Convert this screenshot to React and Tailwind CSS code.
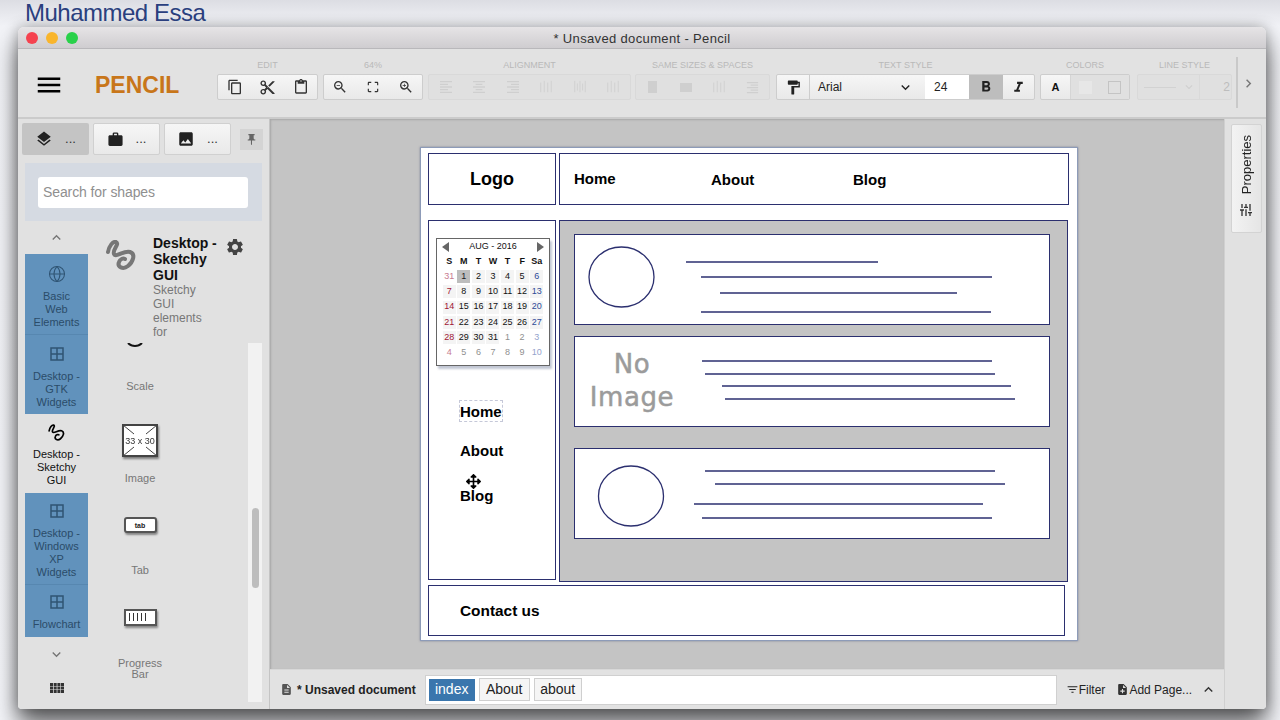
import React from "react";
import {
  MdContentCopy, MdContentCut, MdContentPaste, MdZoomIn, MdZoomOut, MdCropFree, MdFormatAlignLeft, MdFormatAlignCenter,
  MdFormatAlignRight, MdFormatPaint, MdFormatItalic, MdFormatBold, MdLayers, MdWork, MdPhoto, MdPushPin, MdSettings,
  MdBorderAll, MdExpandLess, MdExpandMore, MdTune, MdFilterList, MdNoteAdd, MdDescription, MdMenu, MdChevronRight,
} from "react-icons/md";
import { FaArrowsAlt } from "react-icons/fa";
import { Globe } from "lucide-react";

function Squiggle({ className, thin }) {
  return (
    <svg viewBox="0 0 30 30" className={className} fill="none" stroke="currentColor" strokeWidth={thin ? 3 : 4} strokeLinecap="round" strokeLinejoin="round">
      <path d="M2 12C3 6 7 1 10 2C14 4 6 10 8 14C10 18 18 10 24 12C30 14 27 22 22 26C17 30 11 27 13 22C14 19 17 18 19 19" />
    </svg>
  );
}

function VBars({ three }) {
  return (
    <svg viewBox="0 0 16 16" className="h-[14px] w-[14px]" stroke="currentColor" fill="none">
      <path d={three ? "M2 3V14M6 1V14M10 3V14M14 1V14" : "M2 1V14M5 4V12M8 1V14M11 4V12M14 1V14"} />
    </svg>
  );
}

function Group({ label, className, children, off }) {
  return (
    <div className={`flex shrink-0 flex-col ${className}`}>
      <div className="flex h-[12px] items-center justify-center text-[9px] text-[#b9b9b9]">{label}</div>
      <div className={`mt-[2px] flex h-[26px] items-center rounded-[2px] border ${off ? "border-[#d9d9d9] bg-[#e0e0e0] text-[#cfcfcf]" : "border-[#cdcdcd] bg-gradient-to-b from-[#f6f6f6] to-[#e9e9e9] text-[#333]"}`}>
        {children}
      </div>
    </div>
  );
}

function TB({ children, className = "" }) {
  return <div className={`flex h-full flex-1 items-center justify-center ${className}`}>{children}</div>;
}

function Toolbar() {
  return (
    <div className="flex h-[70px] shrink-0 border-b-2 border-[#cbcbcb] bg-[#e2e2e2] pt-[11px]">
      <div className="mt-[6px] flex h-[38px] w-[199px] shrink-0 items-center">
        <MdMenu className="ml-[16px] h-[30px] w-[30px] text-black" />
        <span className="ml-[31px] text-[23px] font-bold text-[#c8761a]">PENCIL</span>
      </div>
      <Group label="EDIT" className="w-[101px]">
        <TB><MdContentCopy className="text-[16px]" /></TB>
        <TB><MdContentCut className="text-[17px]" /></TB>
        <TB><MdContentPaste className="text-[16px]" /></TB>
      </Group>
      <Group label="64%" className="ml-[5px] w-[100px]">
        <TB><MdZoomOut className="text-[16px]" /></TB>
        <TB><MdCropFree className="text-[14px]" /></TB>
        <TB><MdZoomIn className="text-[16px]" /></TB>
      </Group>
      <Group label="ALIGNMENT" className="ml-[5px] w-[203px]" off>
        <TB><MdFormatAlignLeft className="text-[16px]" /></TB>
        <TB><MdFormatAlignCenter className="text-[16px]" /></TB>
        <TB><MdFormatAlignRight className="text-[16px]" /></TB>
        <TB><VBars three /></TB>
        <TB><VBars /></TB>
        <TB><VBars three /></TB>
      </Group>
      <Group label="SAME SIZES & SPACES" className="ml-[4px] w-[135px]" off>
        <TB><div className="h-[12px] w-[9px] bg-[#cfcfcf]" /></TB>
        <TB><div className="h-[9px] w-[12px] bg-[#cfcfcf]" /></TB>
        <TB><VBars three /></TB>
        <TB><MdFormatAlignRight className="text-[15px]" /></TB>
      </Group>
      <Group label="TEXT STYLE" className="ml-[6px] w-[259px]">
        <div className="flex h-full w-[33px] items-center justify-center border-r border-[#cdcdcd]"><MdFormatPaint className="text-[17px] text-[#222]" /></div>
        <div className="flex h-full w-[115px] items-center justify-between pl-[8px] pr-[11px] text-[12px] text-[#222]">
          <span>Arial</span>
          <MdExpandMore className="text-[17px]" />
        </div>
        <div className="flex h-full w-[44px] items-center bg-white pl-[9px] text-[12px] text-[#222]">24</div>
        <div className="flex h-full w-[34px] items-center justify-center bg-[#bdbdbd]"><MdFormatBold className="text-[18px] text-[#222]" /></div>
        <div className="flex h-full flex-1 items-center justify-center"><MdFormatItalic className="text-[17px] text-[#222]" /></div>
      </Group>
      <Group label="COLORS" className="ml-[5px] w-[90px]">
        <div className="flex h-full w-[30px] items-center justify-center border-r border-[#d5d5d5] text-[11px] font-bold text-[#111]">A</div>
        <div className="flex h-full flex-1 items-center justify-center bg-[#e0e0e0]"><div className="h-[13px] w-[13px] bg-[#e7e7e7]" /></div>
        <div className="flex h-full flex-1 items-center justify-center bg-[#e0e0e0]"><div className="h-[13px] w-[13px] border border-[#c4c4c4]" /></div>
      </Group>
      <Group label="LINE STYLE" className="ml-[7px] w-[95px]" off>
        <div className="flex h-full w-[62px] items-center justify-between border-r border-[#d9d9d9] pl-[6px] pr-[3px]">
          <div className="h-px w-[32px] bg-[#d2d2d2]" />
          <MdExpandMore className="text-[14px]" />
        </div>
        <div className="flex-1 pr-[1px] text-right text-[12px] text-[#bdbdbd]">2</div>
      </Group>
      <div className="ml-[4px] mt-[-3px] h-[51px] w-[2px] bg-[#c9c9c9]" />
      <MdChevronRight className="ml-[2px] mt-[15px] text-[17px] text-[#777]" />
    </div>
  );
}

function Category({ label, icon, className, selected }) {
  return (
    <div className={`flex flex-col items-center text-center text-[11px] leading-[13px] ${selected ? "text-[#111]" : "bg-[#6192bc] text-[#2b4c69]"} ${className}`}>
      {icon}
      <div className="mt-[7px]">{label}</div>
    </div>
  );
}

const catIcon = "h-[18px] w-[18px] text-[#2f5473]";

function Shape({ label, children, shift, twoLine }) {
  return (
    <div className="flex h-[92px] w-[104px] shrink-0 flex-col items-center">
      <div className={`flex h-[56px] items-center justify-center ${shift ? "-translate-y-[7px]" : ""}`}>{children}</div>
      <div className={`text-center text-[11px] text-[#777] ${twoLine ? "mt-[6px] leading-[11px]" : "mt-[3px] leading-[14px]"}`}>{label}</div>
    </div>
  );
}

function PanelTab({ icon, className }) {
  return (
    <div className={`flex w-[67px] items-center justify-center gap-[12px] rounded-[2px] ${className}`}>
      {icon}
      <span className="text-[13px] text-[#333]">...</span>
    </div>
  );
}

function LeftPanel() {
  const plain = "ml-[4px] border border-[#d0d0d0] bg-gradient-to-b from-[#f6f6f6] to-[#e9e9e9]";
  return (
    <div className="flex w-[252px] shrink-0 flex-col overflow-hidden rounded-bl-[4px] border-r border-[#c4c4c4] bg-[#e1e1e1]">
      <div className="mt-[4px] flex h-[32px] shrink-0 pl-[4px]">
        <PanelTab className="bg-[#c4c4c4]" icon={<MdLayers className="text-[18px] text-[#222]" />} />
        <PanelTab className={plain} icon={<MdWork className="text-[17px] text-[#222]" />} />
        <PanelTab className={plain} icon={<MdPhoto className="text-[18px] text-[#222]" />} />
        <div className="ml-[9px] mt-[6px] flex h-[21px] w-[23px] items-center justify-center bg-[#d4d4d4]"><MdPushPin className="text-[13px] text-[#666]" /></div>
      </div>
      <div className="ml-[7px] mt-[8px] flex h-[58px] w-[237px] shrink-0 items-center bg-[#d5dae2] pl-[13px]">
        <div className="flex h-[31px] w-[210px] items-center rounded-[3px] bg-white pl-[5px] pt-[1px] text-[14px] tracking-[-0.1px] text-[#8f8f8f]">Search for shapes</div>
      </div>
      <div className="flex min-h-0 flex-1">
        <div className="ml-[7px] flex w-[63px] shrink-0 flex-col">
          <div className="flex h-[33px] items-center justify-center"><MdExpandLess className="text-[17px] text-[#777]" /></div>
          <Category label={<>Basic<br />Web<br />Elements</>} icon={<Globe className={catIcon} strokeWidth={1.4} />} className="h-[81px] border-b border-[#5787b0] pt-[11px]" />
          <Category label={<>Desktop -<br />GTK<br />Widgets</>} icon={<MdBorderAll className={catIcon} />} className="h-[79px] pt-[10px]" />
          <Category label={<>Desktop -<br />Sketchy<br />GUI</>} selected icon={<Squiggle thin className="h-[17px] w-[17px] text-black" />} className="h-[79px] pt-[10px]" />
          <Category label={<>Desktop -<br />Windows<br />XP<br />Widgets</>} icon={<MdBorderAll className={catIcon} />} className="h-[92px] border-b border-[#5787b0] pt-[9px]" />
          <Category label="Flowchart" icon={<MdBorderAll className={catIcon} />} className="h-[52px] pt-[8px]" />
          <div className="flex h-[34px] items-center justify-center"><MdExpandMore className="text-[17px] text-[#777]" /></div>
          <div className="flex h-[34px] items-center justify-center">
            <svg viewBox="0 0 14 10" className="h-[10px] w-[14px]" fill="#333">
              <path d="M0 0h3v3H0zM3.7 0h3v3h-3zM7.4 0h3v3h-3zM11 0h3v3h-3zM0 3.6h3v3H0zM3.7 3.6h3v3h-3zM7.4 3.6h3v3h-3zM11 3.6h3v3h-3zM0 7h3v3H0zM3.7 7h3v3h-3zM7.4 7h3v3h-3zM11 7h3v3h-3z" />
            </svg>
          </div>
        </div>
        <div className="flex w-[174px] shrink-0 flex-col">
          <div className="h-[122px] shrink-0 pl-[18px] pt-[19px]">
            <div className="flex">
              <Squiggle className="h-[30px] w-[30px] shrink-0 text-[#777]" />
              <div className="ml-[17px] mt-[-5px] w-[68px]">
                <div className="text-[14px] font-bold leading-[16px] text-[#111]">Desktop - Sketchy GUI</div>
                <div className="w-[52px] text-[12px] leading-[14px] text-[#777]">Sketchy GUI elements for</div>
              </div>
              <MdSettings className="ml-[4px] mt-[-3px] shrink-0 text-[20px] text-[#444]" />
            </div>
          </div>
          <div className="flex h-[359px] shrink-0">
            <div className="w-[160px] overflow-hidden">
              <div className="-mt-[23px] flex flex-col">
                <Shape label="Scale">
                  <svg viewBox="0 0 16 8" className="-ml-[10px] -mt-[6px] h-[8px] w-[16px]" fill="none" stroke="#111" strokeWidth="2"><path d="M1 2C5 6 11 6 15 2" /></svg>
                </Shape>
                <Shape label="Image">
                  <svg viewBox="0 0 36 33" className="h-[33px] w-[36px] drop-shadow-[1px_2px_1px_rgba(0,0,0,0.45)]">
                    <rect x="1" y="1" width="34" height="31" fill="#fff" stroke="#444" strokeWidth="2" />
                    <path d="M1 1L12 10M35 1L24 10M1 32L12 23M35 32L24 23" stroke="#444" />
                    <text x="18" y="20" textAnchor="middle" fontSize="9" fontFamily="Liberation Sans" fill="#333">33 x 30</text>
                  </svg>
                </Shape>
                <Shape label="Tab" shift>
                  <div className="flex h-[16px] w-[33px] items-center justify-center rounded-[3px] border-2 border-[#555] bg-white text-[7px] font-bold leading-none text-[#222] shadow-[1px_2px_2px_rgba(0,0,0,0.4)]">tab</div>
                </Shape>
                <Shape label={<>Progress<br />Bar</>} shift twoLine>
                  <div className="flex h-[17px] w-[33px] items-center gap-[3px] border-2 border-[#555] bg-white pl-[3px] shadow-[1px_2px_2px_rgba(0,0,0,0.4)]">
                    <div className="h-[8px] w-px bg-[#333]" /><div className="h-[8px] w-px bg-[#333]" /><div className="h-[8px] w-px bg-[#333]" /><div className="h-[8px] w-px bg-[#333]" /><div className="h-[8px] w-px bg-[#333]" />
                  </div>
                </Shape>
              </div>
            </div>
            <div className="flex h-full w-[14px] shrink-0 flex-col items-center bg-[#f2f2f2] pt-[165px]">
              <div className="h-[80px] w-[7px] rounded-full bg-[#bdbdbd]" />
            </div>
          </div>
        </div>
      </div>
    </div>
  );
}

const calDays = [
  ["31", "o"], ["1", "s"], ["2", "c"], ["3", "c"], ["4", "c"], ["5", "c"], ["6", "c"],
  ["7", "c"], ["8", "c"], ["9", "c"], ["10", "c"], ["11", "c"], ["12", "c"], ["13", "c"],
  ["14", "c"], ["15", "c"], ["16", "c"], ["17", "c"], ["18", "c"], ["19", "c"], ["20", "c"],
  ["21", "c"], ["22", "c"], ["23", "c"], ["24", "c"], ["25", "c"], ["26", "c"], ["27", "c"],
  ["28", "c"], ["29", "c"], ["30", "c"], ["31", "c"], ["1", "o"], ["2", "o"], ["3", "o"],
  ["4", "o"], ["5", "o"], ["6", "o"], ["7", "o"], ["8", "o"], ["9", "o"], ["10", "o"],
];

function dayClass(kind, i) {
  const col = i % 7;
  if (kind === "s") return "bg-[#bdbdbd] text-[#222]";
  if (kind === "o") {
    if (col === 0) return "text-[#c77b90]";
    if (col === 6) return "text-[#95a3cc]";
    return "text-[#8f8f8f]";
  }
  if (col === 0) return "bg-[#f4f4f4] text-[#a01535]";
  if (col === 6) return "bg-[#f4f4f4] text-[#2f4b98]";
  return "bg-[#f4f4f4] text-[#111]";
}

function Calendar() {
  return (
    <div className="absolute left-[15px] top-[90px] h-[128px] w-[114px] border border-[#666] bg-white pl-[5px] font-normal shadow-[2px_3px_2px_rgba(120,130,160,0.45)]">
      <div className="flex h-[14px] w-[102px] items-center justify-between pt-[1px] text-[9px] text-[#111]">
        <div className="h-0 w-0 border-y-[5px] border-r-[7px] border-y-transparent border-r-[#666]" />
        <span>AUG - 2016</span>
        <div className="h-0 w-0 border-y-[5px] border-l-[7px] border-y-transparent border-l-[#666]" />
      </div>
      <div className="mt-[1px] grid w-[102px] grid-cols-7 auto-rows-[15.2px] text-center text-[9px]">
        {["S", "M", "T", "W", "T", "F", "Sa"].map((d, i) => (
          <div key={i} className="flex items-center justify-center font-bold text-[#111]">{d}</div>
        ))}
        {calDays.map(([d, k], i) => (
          <div key={i} className="flex items-center justify-center">
            <div className={`flex h-[13px] w-[13px] items-center justify-center ${dayClass(k, i)}`}>{d}</div>
          </div>
        ))}
      </div>
    </div>
  );
}

function Page() {
  const bx = "absolute border-[1.5px] border-[#2b2f6f]";
  const lines = [
    [686, 878, 262], [701, 992, 277], [720, 957, 293], [701, 991, 312],
    [702, 992, 361], [705, 995, 374], [722, 1011, 386], [725, 1015, 399],
    [705, 995, 471], [715, 1005, 484], [694, 983, 504], [702, 992, 518],
  ];
  return (
    <div className="absolute left-[150px] top-[28px] h-[494px] w-[658px] border border-[#8d9bb8] bg-white text-[15px] font-bold text-black shadow-[0_0_2px_rgba(60,70,110,0.5)]">
      <div className={`${bx} left-[7px] top-[5px] flex h-[52px] w-[128px] items-center justify-center text-[18px]`}>Logo</div>
      <div className={`${bx} left-[138px] top-[5px] h-[52px] w-[510px]`} />
      <span className="absolute left-[153px] top-[20px]">Home</span>
      <span className="absolute left-[290px] top-[21px]">About</span>
      <span className="absolute left-[432px] top-[21px]">Blog</span>

      <div className={`${bx} left-[7px] top-[72px] h-[360px] w-[128px]`} />
      <Calendar />
      <div className="absolute left-[38px] top-[252px] h-[22px] w-[44px] border border-dashed border-[#c5c8d8]" />
      <span className="absolute left-[39px] top-[253px]">Home</span>
      <span className="absolute left-[39px] top-[292px]">About</span>
      <span className="absolute left-[39px] top-[337px]">Blog</span>
      <FaArrowsAlt className="absolute left-[45px] top-[326px] text-[15px] text-black" />

      <div className={`${bx} left-[138px] top-[72px] h-[362px] w-[509px] bg-[#c4c4c4]`} />
      <div className={`${bx} left-[153px] top-[86px] h-[91px] w-[476px] bg-white`} />
      <div className={`${bx} left-[153px] top-[188px] h-[91px] w-[476px] bg-white`} />
      <div className={`${bx} left-[153px] top-[300px] h-[91px] w-[476px] bg-white`} />
      <div className="absolute left-[152px] top-[200px] flex w-[118px] flex-col items-center text-[26px] font-normal leading-[33px] tracking-[0.6px] text-[#9b9b9b] [-webkit-text-stroke:0.5px_#9b9b9b] [font-family:'DejaVu_Sans',sans-serif]">
        <span>No</span>
        <span>Image</span>
      </div>
      <svg className="absolute left-0 top-0 h-[492px] w-[656px]" viewBox="421 148 656 492" fill="none" stroke="#2b2f6f" strokeWidth="1.3">
        <ellipse cx="621.5" cy="277" rx="32.5" ry="30" />
        <ellipse cx="631" cy="496" rx="32.5" ry="30" />
        {lines.map(([a, b, y]) => (
          <path key={`${a}-${y}`} d={`M${a} ${y}H${b}`} />
        ))}
      </svg>

      <div className={`${bx} left-[7px] top-[437px] flex h-[51px] w-[637px] items-center pl-[31px] text-[15.4px]`}>Contact us</div>
    </div>
  );
}

function BottomBar() {
  return (
    <div className="flex h-[40px] shrink-0 items-center border-t border-[#d8d8d8] bg-[#e2e2e2]">
      <MdDescription className="ml-[10px] text-[13px] text-[#555]" />
      <span className="ml-[4px] text-[12px] font-bold text-[#222]">* Unsaved document</span>
      <div className="ml-[9px] flex h-[30px] w-[632px] items-center gap-[4px] border border-[#d0d0d0] bg-white pl-[3px] text-[14px]">
        <div className="flex h-[22px] w-[46px] items-center justify-center bg-[#3a76ad] text-white">index</div>
        <div className="flex h-[23px] w-[51px] items-center justify-center border border-[#cfcfcf] bg-[#f5f5f5] text-[#222]">About</div>
        <div className="flex h-[23px] w-[48px] items-center justify-center border border-[#cfcfcf] bg-[#f5f5f5] text-[#222]">about</div>
      </div>
      <MdFilterList className="ml-[9px] text-[13px] text-[#222]" />
      <span className="text-[12px] text-[#222]">Filter</span>
      <MdNoteAdd className="ml-[11px] text-[13px] text-[#333]" />
      <span className="text-[12px] text-[#222]">Add Page...</span>
      <MdExpandLess className="ml-[8px] text-[17px] text-[#333]" />
    </div>
  );
}

function RightPanel() {
  return (
    <div className="flex w-[42px] shrink-0 flex-col items-center rounded-br-[4px] border-l border-[#d0d0d0] bg-[#e1e1e1] pt-[5px]">
      <div className="ml-[1px] flex h-[109px] w-[31px] flex-col items-center rounded-[2px] border border-[#d3d3d3] bg-gradient-to-r from-[#f3f3f3] to-[#e5e5e5] pt-[10px]">
        <span className="rotate-180 text-[13px] leading-none text-[#222] [writing-mode:vertical-rl]">Properties</span>
        <MdTune className="mt-[8px] rotate-90 text-[16px] text-[#333]" />
      </div>
    </div>
  );
}

export default function App() {
  return (
    <div className="h-[720px] w-[1280px] overflow-hidden bg-[linear-gradient(180deg,#dcdde3_0px,#f2f3f7_26px,#f5f6fa_100%)] [font-family:'Liberation_Sans',Arial,sans-serif]">
      <div className="h-[27px] pl-[25px] text-[24px] leading-[26px] tracking-[-0.5px] text-[#2a3f7e]">Muhammed Essa</div>
      <div className="ml-[18px] flex h-[682px] w-[1248px] flex-col rounded-t-[6px] rounded-b-[4px] shadow-[0_16px_24px_rgba(0,0,0,0.6),0_0_14px_rgba(0,0,0,0.3)]">
        <div className="relative flex h-[22px] shrink-0 items-center justify-center rounded-t-[6px] border-b border-[#b9b8bb] bg-gradient-to-b from-[#e6e4e6] to-[#cfcdd0] pt-[2px] text-[13px] tracking-[0.35px] text-[#333]">
          <div className="absolute left-[8px] top-[5px] flex gap-[8px]">
            <div className="h-[12px] w-[12px] rounded-full bg-[#f5424f]" />
            <div className="h-[12px] w-[12px] rounded-full bg-[#f9b52c]" />
            <div className="h-[12px] w-[12px] rounded-full bg-[#29d14a]" />
          </div>
          * Unsaved document - Pencil
        </div>
        <Toolbar />
        <div className="flex min-h-0 flex-1">
          <LeftPanel />
          <div className="flex min-w-0 flex-1 flex-col">
            <div className="relative flex-1 bg-[#c4c4c4] shadow-[inset_1px_1px_2px_rgba(0,0,0,0.15)]">
              <Page />
            </div>
            <BottomBar />
          </div>
          <RightPanel />
        </div>
      </div>
    </div>
  );
}
